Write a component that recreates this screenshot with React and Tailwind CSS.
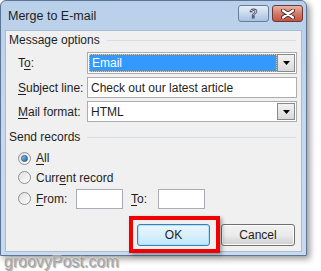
import React from 'react'

const FONT = { fontFamily: '"Segoe UI", "Liberation Sans", Arial, sans-serif' }

function Ul({ children }) {
  return <span className="underline underline-offset-[2px] decoration-[1px]">{children}</span>
}

function GroupHeader({ label, className = '' }) {
  return (
    <div className={`flex items-center h-[18px] ${className}`}>
      <span className="text-[12px] text-[#1e1e1e] leading-none">{label}</span>
      <div className="flex-1 h-px bg-[#d5dfe5] ml-[7px] mr-[5px]" />
    </div>
  )
}

function DropArrow() {
  return (
    <div className="w-[18px] h-full border border-[#8a8a8a] bg-gradient-to-b from-[#f2f2f2] to-[#d9d9d9] flex items-center justify-center">
      <svg width="7" height="4" viewBox="0 0 7 4"><path d="M0 0h7L3.5 4z" fill="#000" /></svg>
    </div>
  )
}

function Radio({ checked }) {
  return (
    <div className="w-[13px] h-[13px] rounded-full border border-[#8e8f8f] bg-gradient-to-br from-[#e0e0e0] to-[#fdfdfd] flex items-center justify-center">
      {checked && <div className="w-[7px] h-[7px] rounded-full bg-gradient-to-br from-[#8ad0f6] to-[#1b5f9c] border border-[#2a5e8f]" />}
    </div>
  )
}

export default function App() {
  return (
    <div className="relative w-[321px] h-[271px] bg-white overflow-hidden" style={FONT}>
      {/* window */}
      <div className="w-[307px] h-[256px] rounded-t-[6px] border border-[#5c7594] bg-gradient-to-b from-[#b9d0ea] via-[#c6d8ec] to-[#c9daee] shadow-[3px_3px_6px_rgba(0,0,0,0.4)] flex flex-col">
        {/* title bar */}
        <div className="h-[29px] flex items-start pl-[7px] pr-[3px]">
          <span className="text-[12.5px] text-[#1e1e1e] mt-[7px] leading-[16px]">Merge to E-mail</span>
          <div className="ml-auto flex gap-[3px] mt-[4px]">
            <div className="w-[31px] h-[17px] rounded-[3px] border border-[#6a7d97] bg-gradient-to-b from-[#e6eef8] via-[#c9d9ec] to-[#a9c0dd] flex items-center justify-center">
              <span className="text-white font-bold text-[13px] leading-none [-webkit-text-stroke:0.8px_#3a4658]">?</span>
            </div>
            <div className="w-[31px] h-[17px] rounded-[3px] border border-[#6b3a35] bg-gradient-to-b from-[#eab3a8] via-[#d47a6a] to-[#c8503f] flex items-center justify-center">
              <svg width="14" height="10" viewBox="0 0 14 10">
                <path d="M2 1.5l10 7M12 1.5l-10 7" stroke="#3d2b2b" strokeWidth="4" strokeLinecap="round" />
                <path d="M2 1.5l10 7M12 1.5l-10 7" stroke="#fff" strokeWidth="2.2" strokeLinecap="round" />
              </svg>
            </div>
          </div>
        </div>

        {/* client area */}
        <div className="mx-[4px] h-[222px] bg-[#f0f0f0] border border-[#a9bcd3] pl-[3px] text-[12px] text-[#1e1e1e]">
          <GroupHeader label="Message options" className="mt-[0px]" />

          <div className="flex flex-col gap-[3px] mt-[3px] pr-[4px]">
            <div className="flex items-center h-[22px]">
              <span className="w-[69px] ml-[9px]">T<Ul>o</Ul>:</span>
              <div className="flex-1 h-full border border-[#abadb3] bg-white flex p-[1px]">
                <div className="flex-1 bg-[#3399ff] border border-dotted border-[#f2c48a] text-white flex items-center pl-[2px]">Email</div>
                <DropArrow />
              </div>
            </div>
            <div className="flex items-center h-[21px]">
              <span className="w-[69px] ml-[9px]"><Ul>S</Ul>ubject line:</span>
              <div className="flex-1 h-full border border-[#abadb3] bg-white flex items-center pl-[3px]">Check out our latest article</div>
            </div>
            <div className="flex items-center h-[21px]">
              <span className="w-[69px] ml-[9px]"><Ul>M</Ul>ail format:</span>
              <div className="flex-1 h-full border border-[#abadb3] bg-white flex p-[1px]">
                <div className="flex-1 flex items-center pl-[2px]">HTML</div>
                <DropArrow />
              </div>
            </div>
          </div>

          <GroupHeader label="Send records" className="mt-[6px]" />

          <div className="ml-[9px] mt-[3px]">
            <div className="flex items-center h-[18px] gap-[5px]">
              <Radio checked /><span><Ul>A</Ul>ll</span>
            </div>
            <div className="flex items-center h-[19px] gap-[5px] mt-[1px]">
              <Radio /><span>Curr<Ul>e</Ul>nt record</span>
            </div>
            <div className="flex items-center h-[21px] mt-[1px]">
              <Radio />
              <span className="ml-[5px] w-[40px]"><Ul>F</Ul>rom:</span>
              <div className="w-[47px] h-[20px] border border-[#abadb3] bg-white" />
              <span className="ml-[8px] w-[27px]"><Ul>T</Ul>o:</span>
              <div className="w-[47px] h-[20px] border border-[#abadb3] bg-white" />
            </div>
          </div>

          <div className="flex justify-end gap-[11px] mt-[15px] pr-[6px]">
            <div className="w-[73px] h-[22px] rounded-[3px] border border-[#3c7fb1] bg-gradient-to-b from-[#eaf6fd] via-[#d9f0fc] to-[#bee6fd] shadow-[inset_0_0_0_1px_#aee0fa] flex items-center justify-center">OK</div>
            <div className="w-[74px] h-[22px] rounded-[3px] border border-[#707070] bg-gradient-to-b from-[#f2f2f2] via-[#ebebeb] to-[#cfcfcf] shadow-[inset_0_0_0_1px_#fcfcfc] flex items-center justify-center">Cancel</div>
          </div>
        </div>
      </div>

      {/* red highlight */}
      <div className="absolute left-[129px] top-[216px] w-[91px] h-[37px] border-[4px] border-[#f00000] shadow-[2px_2px_4px_rgba(0,0,0,0.35)]" />

      {/* watermark */}
      <div className="absolute left-[4px] top-[253px] text-[16px] leading-[18px] text-[#a3a3a3] [text-shadow:0_0_2px_#fff,1px_1px_1px_#888]" style={{ fontFamily: '"Liberation Sans", Arial, sans-serif' }}>
        groovyPost.com
      </div>
    </div>
  )
}
